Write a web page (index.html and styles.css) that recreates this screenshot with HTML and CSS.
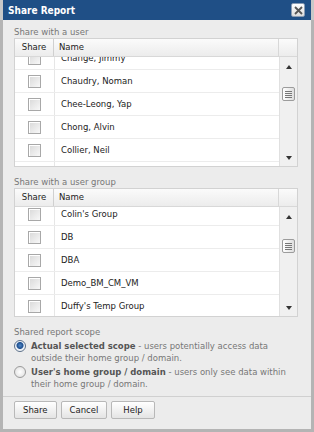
FILE: index.html
```html
<!DOCTYPE html>
<html lang="en">
<head>
    <meta charset="UTF-8">
    <title>Share Report</title>
    <link rel="stylesheet" href="styles.css">
</head>
<body>
    <div class="dialog">
        <div class="title-bar">
            <span class="title">Share Report</span>
            <span class="close">
                <svg width="9" height="9" viewBox="0 0 9 9"><path d="M1 1L8 8M8 1L1 8" stroke="#555" stroke-width="1.8"/></svg>
            </span>
        </div>
        <div class="content">
            <div class="section-label">Share with a user</div>
            <div class="grid">
                <div class="grid-head">
                    <div class="col-share">Share</div>
                    <div class="col-name">Name</div>
                    <div class="col-scroll"></div>
                </div>
                <div class="grid-body">
                    <div class="rows users">
                        <div class="row"><span class="check"></span><span class="name">Change, Jimmy</span></div>
                        <div class="row"><span class="check"></span><span class="name">Chaudry, Noman</span></div>
                        <div class="row"><span class="check"></span><span class="name">Chee-Leong, Yap</span></div>
                        <div class="row"><span class="check"></span><span class="name">Chong, Alvin</span></div>
                        <div class="row"><span class="check"></span><span class="name">Collier, Neil</span></div>
                        <div class="row"><span class="check"></span><span class="name">Cooper, Dan</span></div>
                    </div>
                    <div class="scrollbar">
                        <span class="arrow up"></span>
                        <span class="thumb"><i></i><i></i><i></i><i></i></span>
                        <span class="arrow down"></span>
                    </div>
                </div>
            </div>

            <div class="section-label">Share with a user group</div>
            <div class="grid">
                <div class="grid-head">
                    <div class="col-share">Share</div>
                    <div class="col-name">Name</div>
                    <div class="col-scroll"></div>
                </div>
                <div class="grid-body">
                    <div class="rows groups">
                        <div class="row"><span class="check"></span><span class="name">Colin's Group</span></div>
                        <div class="row"><span class="check"></span><span class="name">DB</span></div>
                        <div class="row"><span class="check"></span><span class="name">DBA</span></div>
                        <div class="row"><span class="check"></span><span class="name">Demo_BM_CM_VM</span></div>
                        <div class="row"><span class="check"></span><span class="name">Duffy's Temp Group</span></div>
                    </div>
                    <div class="scrollbar">
                        <span class="arrow up"></span>
                        <span class="thumb mid"><i></i><i></i><i></i><i></i></span>
                        <span class="arrow down"></span>
                    </div>
                </div>
            </div>

            <div class="section-label">Shared report scope</div>
            <div class="option">
                <span class="radio checked"></span>
                <p><b>Actual selected scope</b> - users potentially access data outside their home group / domain.</p>
            </div>
            <div class="option">
                <span class="radio"></span>
                <p><b>User's home group / domain</b> - users only see data within their home group / domain.</p>
            </div>

            <div class="buttons">
                <button>Share</button>
                <button>Cancel</button>
                <button class="help">Help</button>
            </div>
        </div>
    </div>
</body>
</html>
```

FILE: styles.css
```css
body {
    margin: 0;
    font-family: "DejaVu Sans", Verdana, sans-serif;
    font-size: 8.5px;
    color: #222;
    background: #fff;
}

.dialog {
    width: 314px;
    height: 432px;
    box-sizing: border-box;
    border: 3px solid #b4b4b4;
    border-top: none;
    background: #ececec;
    display: flex;
    flex-direction: column;
}

.title-bar {
    height: 20px;
    background: #1f4f86;
    display: flex;
    align-items: center;
    justify-content: space-between;
    padding: 0 6px 0 5px;
    margin: 0 -3px;
    border-left: 3px solid #c8c8c8;
    border-right: 3px solid #c8c8c8;
}

.title {
    color: #fff;
    font-family: "DejaVu Sans Condensed", "DejaVu Sans", sans-serif;
    font-weight: bold;
    font-size: 10px;
}

.close {
    width: 12px;
    height: 12px;
    background: linear-gradient(#ffffff, #dcdcdc);
    border: 1px solid #8a9cb4;
    border-radius: 2px;
    display: flex;
    align-items: center;
    justify-content: center;
}

.content {
    padding: 6px 13px 0 11px;
    display: flex;
    flex-direction: column;
}

.section-label {
    color: #777;
    line-height: 12px;
}

.grid {
    border: 1px solid #d2d2d2;
    background: #fff;
    margin-bottom: 9px;
}

.grid-head {
    display: flex;
    height: 17px;
    background: linear-gradient(#fbfbfb, #ececec);
    border-bottom: 1px solid #d8d8d8;
    line-height: 17px;
}

.col-share {
    width: 38px;
    text-align: center;
    border-right: 1px solid #d0d0d0;
}

.col-name {
    flex: 1;
    padding-left: 5px;
    border-right: 1px solid #d8d8d8;
}

.col-scroll {
    width: 18px;
}

.grid-body {
    display: flex;
    height: 109px;
    overflow: hidden;
}

.rows {
    flex: 1;
}

.users {
    margin-top: -10px;
}

.groups {
    margin-top: -4px;
}

.row {
    display: flex;
    align-items: center;
    height: 22px;
    border-bottom: 1px solid #ececec;
}

.check {
    width: 11px;
    height: 11px;
    margin: 0 13px 0 13px;
    border: 1px solid #a8a8a8;
    background: linear-gradient(135deg, #d8d8d8, #f8f8f8);
    box-shadow: inset 1px 1px 0 #fff;
}

.name {
    padding-left: 6px;
    border-left: 1px solid #e6e6e6;
    height: 22px;
    line-height: 22px;
}

.scrollbar {
    width: 18px;
    background: #f0f0f0;
    border-left: 1px solid #e0e0e0;
    display: flex;
    flex-direction: column;
    align-items: center;
    padding: 8px 0 6px;
    box-sizing: border-box;
}

.arrow {
    width: 0;
    height: 0;
    border-left: 3px solid transparent;
    border-right: 3px solid transparent;
}

.arrow.up {
    border-bottom: 4px solid #333;
}

.arrow.down {
    border-top: 4px solid #333;
    margin-top: auto;
}

.thumb {
    margin-top: 18px;
    width: 13px;
    height: 14px;
    box-sizing: border-box;
    border: 1px solid #9c9c9c;
    border-radius: 2px;
    background: linear-gradient(90deg, #fff, #dedede);
    display: flex;
    flex-direction: column;
    justify-content: center;
    align-items: center;
    gap: 1px;
}

.thumb.mid {
    margin-top: 20px;
}

.thumb i {
    display: block;
    width: 7px;
    height: 1px;
    background: #777;
}

.option {
    display: flex;
    align-items: flex-start;
    margin-top: 2px;
}

.option p {
    margin: 0;
    color: #777;
    line-height: 12px;
}

.option b {
    color: #555;
}

.radio {
    flex: none;
    width: 12px;
    height: 12px;
    border: 1px solid #9a9a9a;
    border-radius: 50%;
    background: radial-gradient(#fff, #dcdcdc);
    margin: 0 5px 0 0;
    box-sizing: border-box;
}

.radio.checked {
    background: radial-gradient(circle at 50% 45%, #4f88c8 0, #1d4f8f 3px, #e8eef6 4px, #fff 6px);
    border-color: #5b6f88;
}

.buttons {
    margin-top: 6px;
    border-top: 1px solid #d0d0d0;
    padding-top: 4px;
    margin-left: -11px;
    padding-left: 11px;
    margin-right: -13px;
    display: flex;
    gap: 4px;
}

.buttons button {
    font-family: "DejaVu Sans", Verdana, sans-serif;
    font-size: 8.5px;
    color: #222;
    height: 18px;
    padding: 0 8px;
    border: 1px solid #b8b8b8;
    border-radius: 2px;
    background: linear-gradient(#ffffff, #e4e4e4);
}

.buttons .help {
    padding: 0 11px;
}
```
